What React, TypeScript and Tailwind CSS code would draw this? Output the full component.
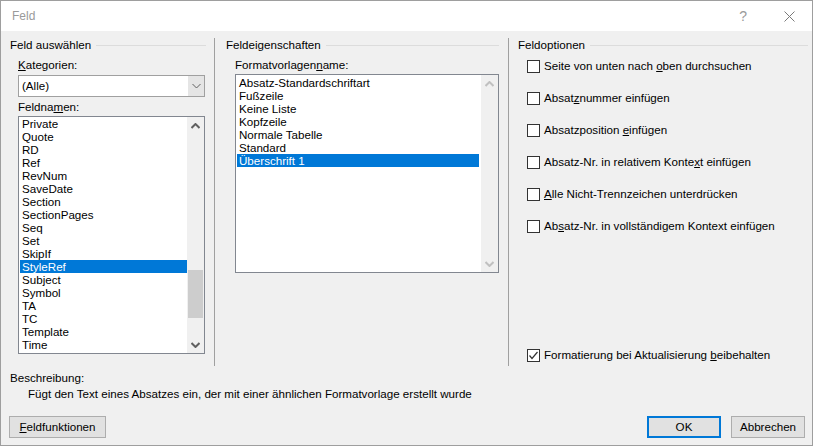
import type { ReactNode } from "react";

const feldnamen = [
  "Private",
  "Quote",
  "RD",
  "Ref",
  "RevNum",
  "SaveDate",
  "Section",
  "SectionPages",
  "Seq",
  "Set",
  "SkipIf",
  "StyleRef",
  "Subject",
  "Symbol",
  "TA",
  "TC",
  "Template",
  "Time",
];

const formatvorlagen = [
  "Absatz-Standardschriftart",
  "Fußzeile",
  "Keine Liste",
  "Kopfzeile",
  "Normale Tabelle",
  "Standard",
  "Überschrift 1",
];

function Chevron({ up, color, bold }: { up?: boolean; color: string; bold?: boolean }) {
  return (
    <svg width="9" height="6" viewBox="0 0 9 6">
      <polyline
        points={up ? "0.5,5 4.5,1 8.5,5" : "0.5,1 4.5,5 8.5,1"}
        fill="none"
        stroke={color}
        strokeWidth={bold ? 2 : 1}
      />
    </svg>
  );
}

function GroupHeader({ title }: { title: string }) {
  return (
    <div className="flex items-center h-[14px] leading-[14px]">
      <span>{title}</span>
      <div className="flex-1 h-px bg-[#dcdcdc] ml-[5px]" />
    </div>
  );
}

function Checkbox({ checked, children }: { checked?: boolean; children: ReactNode }) {
  return (
    <div className="flex items-center h-[14px] leading-[14px] ml-[9px] gap-[4px]">
      <div className="w-[13px] h-[13px] border border-[#333333] bg-white flex items-center justify-center">
        {checked && (
          <svg width="11" height="11" viewBox="0 0 11 11">
            <polyline points="1.5,5.5 4,8.5 9.5,2" fill="none" stroke="#333333" strokeWidth="1.2" />
          </svg>
        )}
      </div>
      <span>{children}</span>
    </div>
  );
}

export default function App() {
  return (
    <div className="w-[814px] h-[447px] bg-white text-[11.6px] text-black font-['Liberation_Sans',Arial,sans-serif]">
      <div className="w-[813px] h-[446px] border border-[#9e9e9e] bg-[#f0f0f0] flex flex-col">
        {/* Title bar */}
        <div className="h-[30px] bg-white flex items-center shrink-0">
          <span className="ml-[11px] text-[#9a9a9a] text-[12px]">Feld</span>
          <span className="ml-auto text-[#9a9a9a] text-[14px] font-light">?</span>
          <div className="ml-[37px] mr-[17px] w-[11px] h-[11px]">
            <svg width="11" height="11" viewBox="0 0 11 11">
              <line x1="0.5" y1="0.5" x2="10.5" y2="10.5" stroke="#7a7a7a" strokeWidth="1" />
              <line x1="10.5" y1="0.5" x2="0.5" y2="10.5" stroke="#7a7a7a" strokeWidth="1" />
            </svg>
          </div>
        </div>

        {/* Groups */}
        <div className="flex h-[328px] mt-[7px] ml-[9px]">
          {/* Feld auswählen */}
          <div className="w-[196px] flex flex-col">
            <GroupHeader title="Feld auswählen" />
            <div className="ml-[8px] mt-[6px] h-[14px] leading-[14px]">
              <u>K</u>ategorien:
            </div>
            <div className="ml-[8px] mt-[3px] w-[187px] h-[22px] border border-[#a0a0a0] bg-white flex">
              <span className="flex-1 pl-[3px] leading-[20px]">(Alle)</span>
              <div className="w-[16px] bg-[#e5e5e5] flex items-center justify-center">
                <Chevron color="#606060" />
              </div>
            </div>
            <div className="ml-[8px] mt-[3px] h-[14px] leading-[14px]">
              Feldna<u>m</u>en:
            </div>
            <div className="ml-[8px] mt-[2px] w-[187px] h-[238px] border border-[#828790] bg-white flex">
              <div className="flex-1 pl-px overflow-hidden">
                {feldnamen.map((n) => (
                  <div
                    key={n}
                    className={`h-[13px] leading-[13px] pl-[2px] ${
                      n === "StyleRef" ? "bg-[#0078d7] text-white" : ""
                    }`}
                  >
                    {n}
                  </div>
                ))}
              </div>
              <div className="w-[17px] bg-[#f0f0f0] flex flex-col">
                <div className="h-[17px] flex items-center justify-center">
                  <Chevron up bold color="#606060" />
                </div>
                <div className="h-[136px]" />
                <div className="h-[48px] mx-px bg-[#cdcdcd]" />
                <div className="flex-1" />
                <div className="h-[17px] flex items-center justify-center">
                  <Chevron bold color="#606060" />
                </div>
              </div>
            </div>
          </div>

          <div className="ml-[8px] w-px bg-[#a0a0a0]" />

          {/* Feldeigenschaften */}
          <div className="ml-[11px] w-[273px] flex flex-col">
            <GroupHeader title="Feldeigenschaften" />
            <div className="ml-[9px] mt-[6px] h-[14px] leading-[14px]">
              Formatvorlagen<u>n</u>ame:
            </div>
            <div className="ml-[9px] mt-[2px] w-[264px] h-[199px] border border-[#828790] bg-white flex">
              <div className="flex-1 pl-px pr-[2px] pt-px overflow-hidden">
                {formatvorlagen.map((n) => (
                  <div
                    key={n}
                    className={`h-[13px] leading-[13px] pl-[2px] ${
                      n === "Überschrift 1" ? "bg-[#0078d7] text-white" : ""
                    }`}
                  >
                    {n}
                  </div>
                ))}
              </div>
              <div className="w-[17px] bg-[#f0f0f0] flex flex-col justify-between">
                <div className="h-[17px] flex items-center justify-center">
                  <Chevron up bold color="#c0c0c0" />
                </div>
                <div className="h-[17px] flex items-center justify-center">
                  <Chevron bold color="#c0c0c0" />
                </div>
              </div>
            </div>
          </div>

          <div className="ml-[9px] w-px bg-[#a0a0a0]" />

          {/* Feldoptionen */}
          <div className="ml-[9px] w-[290px] flex flex-col pb-[4px]">
            <GroupHeader title="Feldoptionen" />
            <div className="mt-[7px] flex flex-col gap-[18px]">
              <Checkbox>
                Seite von unten nach <u>o</u>ben durchsuchen
              </Checkbox>
              <Checkbox>
                Absat<u>z</u>nummer einfügen
              </Checkbox>
              <Checkbox>
                Absatzposition <u>e</u>infügen
              </Checkbox>
              <Checkbox>
                Absatz-Nr. in relativem Konte<u>x</u>t einfügen
              </Checkbox>
              <Checkbox>
                <u>A</u>lle Nicht-Trennzeichen unterdrücken
              </Checkbox>
              <Checkbox>
                Ab<u>s</u>atz-Nr. in vollständigem Kontext einfügen
              </Checkbox>
            </div>
            <div className="mt-auto">
              <Checkbox checked>
                Formatierung bei Aktualisierung <u>b</u>eibehalten
              </Checkbox>
            </div>
          </div>
        </div>

        {/* Beschreibung */}
        <div className="ml-[9px] mt-[5px] h-[14px] leading-[14px]">Beschreibung:</div>
        <div className="ml-[27px] mt-[2px] h-[14px] leading-[14px]">
          Fügt den Text eines Absatzes ein, der mit einer ähnlichen Formatvorlage erstellt wurde
        </div>

        {/* Buttons */}
        <div className="flex mt-[15px] ml-[8px] mr-[7px]">
          <button className="w-[97px] h-[22px] border border-[#adadad] bg-[#e1e1e1] leading-[20px]">
            <u>F</u>eldfunktionen
          </button>
          <button className="ml-auto w-[74px] h-[22px] border-2 border-[#0078d7] bg-[#e1e1e1] leading-[18px]">
            OK
          </button>
          <button className="ml-[10px] w-[74px] h-[22px] border border-[#adadad] bg-[#e1e1e1] leading-[20px]">
            Abbrechen
          </button>
        </div>
      </div>
    </div>
  );
}
